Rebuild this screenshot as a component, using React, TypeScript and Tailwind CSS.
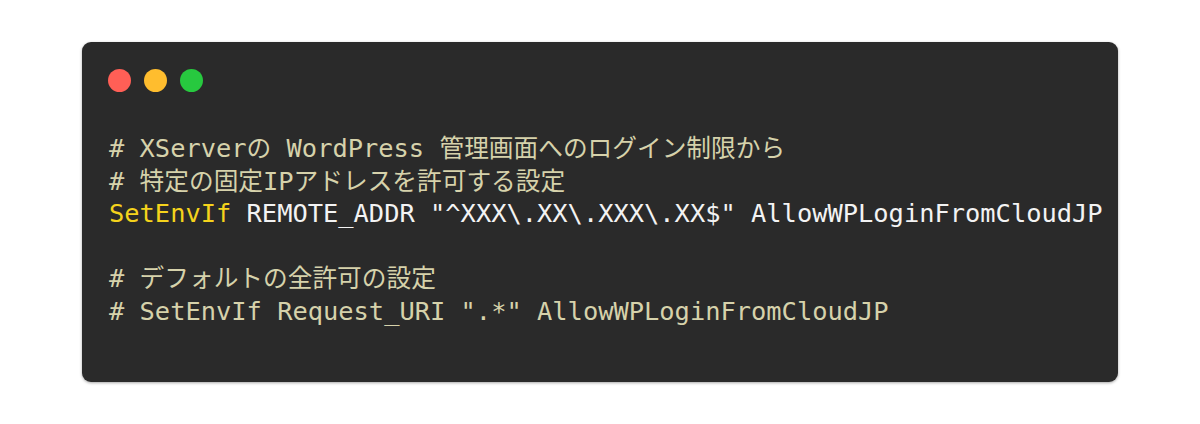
import React from "react";

const mono = "font-['DejaVu_Sans_Mono','Noto_Sans_CJK_JP',monospace]";

function Txt({ s }: { s: string }) {
  const parts = s.split(/([\u3000-\u30ff\u4e00-\u9fff]+)/);
  return (
    <>
      {parts.map((p, i) =>
        /[\u3000-\u30ff\u4e00-\u9fff]/.test(p) ? (
          <span key={i} className="text-[24.7px] leading-[26px] font-['Noto_Sans_CJK_JP',sans-serif]">
            {p}
          </span>
        ) : (
          <span key={i}>{p}</span>
        )
      )}
    </>
  );
}

export default function App() {
  return (
    <div className="w-[1200px] h-[424px] bg-white pt-[42px]">
      <div className="mx-auto w-[1036px] h-[340px] rounded-[9px] bg-[#2a2a2a] shadow-[0_1px_3px_rgba(0,0,0,0.35)] px-[26px] pt-[27px]">
        <div className="flex gap-[13px]">
          <span className="w-[23px] h-[23px] rounded-full bg-[#ff5f56]" />
          <span className="w-[23px] h-[23px] rounded-full bg-[#ffbd2e]" />
          <span className="w-[23px] h-[23px] rounded-full bg-[#27c93f]" />
        </div>
        <div className={`${mono} mt-[40px] text-[25.4px] leading-[32.6px] whitespace-pre pl-[1px]`}>
          <div className="h-[32.6px] text-[#d6d2ab]">
            <Txt s="# XServerの WordPress 管理画面へのログイン制限から" />
          </div>
          <div className="h-[32.6px] text-[#d6d2ab]">
            <Txt s="# 特定の固定IPアドレスを許可する設定" />
          </div>
          <div className="h-[32.6px] text-[#f3f3f3]">
            <span className="text-[#f5d31c]">SetEnvIf</span> REMOTE_ADDR "^XXX\.XX\.XXX\.XX$" AllowWPLoginFromCloudJP
          </div>
          <div className="h-[32.6px]">{"\u00a0"}</div>
          <div className="h-[32.6px] text-[#d6d2ab]">
            <Txt s="# デフォルトの全許可の設定" />
          </div>
          <div className="h-[32.6px] text-[#d6d2ab]"># SetEnvIf Request_URI ".*" AllowWPLoginFromCloudJP</div>
        </div>
      </div>
    </div>
  );
}
